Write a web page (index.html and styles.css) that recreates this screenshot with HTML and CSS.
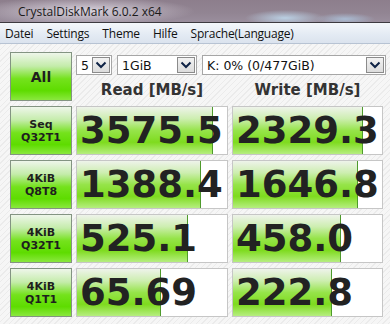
FILE: index.html
```html
<!DOCTYPE html>
<html lang="de">
<head>
<meta charset="UTF-8">
<title>CrystalDiskMark 6.0.2 x64</title>
<link rel="stylesheet" href="styles.css">
</head>
<body>
<div class="window">
  <div class="titlebar"><span class="title">CrystalDiskMark 6.0.2 x64</span></div>
  <div class="menubar">
    <span class="menu m1">Datei</span>
    <span class="menu">Settings</span>
    <span class="menu">Theme</span>
    <span class="menu">Hilfe</span>
    <span class="menu">Sprache(Language)</span>
  </div>
  <div class="main">
    <div class="btn all">All</div>
    <div class="top">
      <div class="combos">
        <div class="combo c-count"><span class="val">5</span><span class="arr"><svg width="12" height="8" viewBox="0 0 12 8"><path d="M1.5 1.5 L6 6 L10.5 1.5" fill="none" stroke="#0f2346" stroke-width="2"/></svg></span></div>
        <div class="combo c-size"><span class="val">1GiB</span><span class="arr"><svg width="12" height="8" viewBox="0 0 12 8"><path d="M1.5 1.5 L6 6 L10.5 1.5" fill="none" stroke="#0f2346" stroke-width="2"/></svg></span></div>
        <div class="combo c-drive"><span class="val">K: 0% (0/477GiB)</span><span class="arr"><svg width="12" height="8" viewBox="0 0 12 8"><path d="M1.5 1.5 L6 6 L10.5 1.5" fill="none" stroke="#0f2346" stroke-width="2"/></svg></span></div>
      </div>
      <div class="heads">
        <div class="head">Read [MB/s]</div>
        <div class="head">Write [MB/s]</div>
      </div>
    </div>

    <div class="btn label">Seq<br>Q32T1</div>
    <div class="cell"><div class="bar" style="width:90.6%"></div><span class="num">3575.5</span></div>
    <div class="cell"><div class="bar" style="width:87.2%"></div><span class="num">2329.3</span></div>

    <div class="btn label">4KiB<br>Q8T8</div>
    <div class="cell"><div class="bar" style="width:82.5%"></div><span class="num">1388.4</span></div>
    <div class="cell"><div class="bar" style="width:84%"></div><span class="num">1646.8</span></div>

    <div class="btn label">4KiB<br>Q32T1</div>
    <div class="cell"><div class="bar" style="width:73.8%"></div><span class="num">525.1</span></div>
    <div class="cell"><div class="bar" style="width:72.5%"></div><span class="num">458.0</span></div>

    <div class="btn label">4KiB<br>Q1T1</div>
    <div class="cell"><div class="bar" style="width:55.7%"></div><span class="num">65.69</span></div>
    <div class="cell"><div class="bar" style="width:66.4%"></div><span class="num">222.8</span></div>
  </div>
</div>
</body>
</html>
```

FILE: styles.css
```css
* {
  margin: 0;
  padding: 0;
  box-sizing: border-box;
}
body {
  width: 390px;
  height: 324px;
  overflow: hidden;
  font-family: "Open Sans", "Noto Sans", sans-serif;
}
.window {
  height: 324px;
  background: #f3f3f3 repeating-linear-gradient(135deg, #f6f6f6 0 3px, #ebebeb 3px 4px);
}
.titlebar {
  height: 23px;
  padding-left: 18px;
  display: flex;
  align-items: center;
  background:
    radial-gradient(ellipse 40px 8px at 285px 18px, rgba(190, 215, 235, .9), rgba(190, 215, 235, 0)),
    radial-gradient(ellipse 30px 6px at 345px 19px, rgba(175, 200, 225, .8), rgba(175, 200, 225, 0)),
    radial-gradient(ellipse 110px 14px at 85px 11px, rgba(230, 225, 235, .85), rgba(230, 225, 235, 0)),
    linear-gradient(#8d7e8c, #928593 60%, #9a8e9d);
  border-bottom: 1px solid #3d3a40;
}
.title {
  font-family: "Open Sans", sans-serif;
  font-size: 12px;
  color: #1a1a1a;
}
.menubar {
  height: 21px;
  display: flex;
  align-items: center;
  background: linear-gradient(#f4f7fb, #e3eaf3 60%, #dbe3ee);
  border-bottom: 1px solid #b7c3d3;
  font-size: 12px;
  color: #111;
  padding-left: 5px;
}
.menu {
  margin-right: 13px;
  letter-spacing: -0.2px;
}
.main {
  display: grid;
  grid-template-columns: 62px 152px 151px;
  grid-template-rows: 49px 49px 49px 49px 49px;
  gap: 5px 4px;
  padding: 8px 0 0 10px;
}
.btn {
  border: 1px solid #839482;
  background: linear-gradient(#eef6ea 0%, #c4ecaa 28%, #74e21c 55%, #5edc00 80%, #8ae83e 100%);
  display: flex;
  align-items: center;
  justify-content: center;
  text-align: center;
  font-family: "DejaVu Sans", Verdana, sans-serif;
  font-weight: bold;
  color: #1e1e1e;
}
.all {
  font-size: 14px;
}
.label {
  font-size: 11px;
  line-height: 13px;
}
.top {
  grid-column: 2 / 4;
  padding-top: 3px;
}
.combos {
  display: flex;
  gap: 5px;
  width: 310px;
}
.combo {
  height: 20px;
  background: #fff;
  border: 1px solid #a6a6a6;
  display: flex;
  align-items: center;
  justify-content: space-between;
  font-family: "DejaVu Sans", Verdana, sans-serif;
  font-size: 12.5px;
  color: #111;
  padding: 1px 1px 1px 4px;
}
.c-count { width: 36px; }
.c-size { width: 80px; }
.c-drive { width: 184px; }
.arr {
  width: 18px;
  height: 16px;
  border: 1px solid #8b8b8b;
  background: linear-gradient(#f2f2f2, #dcdcdc);
  display: flex;
  align-items: center;
  justify-content: center;
}
.heads {
  display: grid;
  grid-template-columns: 152px 151px;
  column-gap: 4px;
  margin-top: 4px;
}
.head {
  text-align: center;
  font-family: "DejaVu Sans", Verdana, sans-serif;
  font-weight: bold;
  font-size: 15px;
  line-height: 22px;
  color: #333;
}
.cell {
  position: relative;
  background: #fff;
  border: 1px solid #c6c6c6;
  overflow: hidden;
}
.bar {
  position: absolute;
  left: 0;
  top: 0;
  bottom: 0;
  background: linear-gradient(#eef3ea 0%, #cdeeb0 25%, #96e44a 50%, #7edb1e 75%, #b6ee80 100%);
  border-right: 1px solid #4e9a2c;
}
.num {
  position: relative;
  display: block;
  padding-left: 3px;
  font-family: "DejaVu Sans", Verdana, sans-serif;
  font-weight: bold;
  font-size: 37px;
  line-height: 48px;
  color: #222;
  white-space: nowrap;
}
```
